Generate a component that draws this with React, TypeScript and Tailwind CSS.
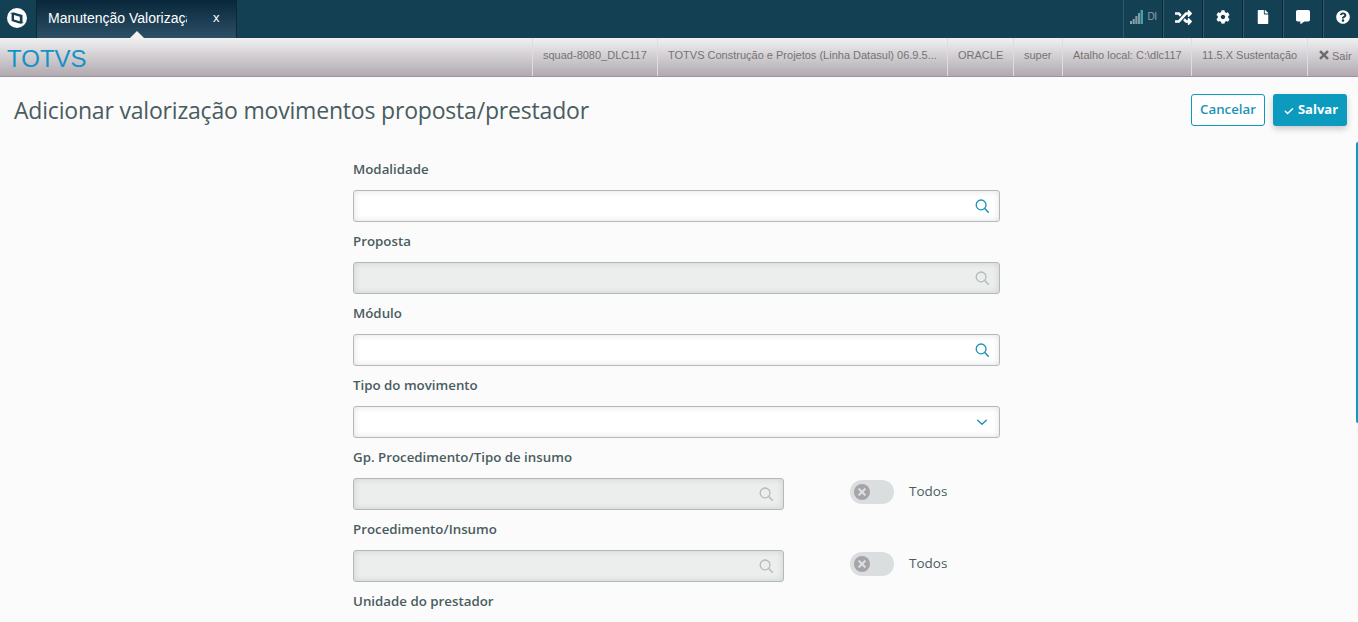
import type { ReactNode } from 'react'
import clsx from 'clsx'
import { FaCog, FaCommentAlt, FaFile, FaQuestionCircle, FaRandom } from 'react-icons/fa'

interface FieldProps {
  label: string
  disabled?: boolean
  select?: boolean
  toggle?: string
}

const FIELDS: FieldProps[] = [
  { label: 'Modalidade' },
  { label: 'Proposta', disabled: true },
  { label: 'Módulo' },
  { label: 'Tipo do movimento', select: true },
  { label: 'Gp. Procedimento/Tipo de insumo', disabled: true, toggle: 'Todos' },
  { label: 'Procedimento/Insumo', disabled: true, toggle: 'Todos' },
]

const SESSION_INFO = [
  { text: 'squad-8080_DLC117', width: 'w-[125px]' },
  { text: 'TOTVS Construção e Projetos (Linha Datasul) 06.9.5...', width: 'w-[290px]' },
  { text: 'ORACLE', width: 'w-[66px]' },
  { text: 'super', width: 'w-[49px]' },
  { text: 'Atalho local: C:\\dlc117', width: 'w-[129px]' },
  { text: '11.5.X Sustentação', width: 'w-[116px]' },
]

function TotvsLogo() {
  return (
    <svg width="20" height="20" viewBox="0 0 20 20">
      <circle cx="10" cy="10" r="10" fill="#fff" />
      <path d="M2.800 5.600C4.500 4.300 6.500 4.300 8.500 4.900l7 2.100v7.600c.7.100 1.300 0 1.900-.3-1.700 1.500-3.900 1.600-5.900 1L4.600 13V5.600c-.7-.3-1.200-.2-1.800 0z" fill="#134053" />
      <path d="M7 7l5.800 1.800v4.400L7 11.400z" fill="#fff" />
    </svg>
  )
}

function SearchIcon() {
  return (
    <svg width="14" height="14" viewBox="0 0 14 14" fill="none" stroke="currentColor">
      <circle cx="6.100" cy="5.900" r="4.900" strokeWidth="1.300" />
      <path d="M9.700 9.500l3.600 3.700" strokeWidth="1.500" strokeLinecap="round" />
    </svg>
  )
}

function ChevronIcon() {
  return (
    <svg width="12" height="8" viewBox="0 0 12 8" fill="none" stroke="currentColor">
      <path d="M1.700 2.200L6 6.200l4.300-4" strokeWidth="1.400" strokeLinecap="round" strokeLinejoin="round" />
    </svg>
  )
}

function SignalIcon() {
  return (
    <svg width="13" height="14" viewBox="0 0 13 14">
      <path d="M0 11h2v3H0zM2.700 9h2v5h-2z" fill="#8fa2ac" />
      <path d="M5.300 6h2.200v8H5.300zM8 3h2v11H8z" fill="#8199a4" />
      <path d="M10.500 0H13v14h-2.500z" fill="#4a9fad" />
    </svg>
  )
}

function TopButton({ children }: { children: ReactNode }) {
  return (
    <div className="flex h-full w-10 shrink-0 items-center justify-center border-r border-l border-r-[#0a2737] border-l-[#33586a] pb-1 text-white">
      {children}
    </div>
  )
}

function TopBar() {
  return (
    <header className="flex h-[38px] bg-[#134053]">
      <div className="flex w-9 items-center justify-center pr-0.5 pb-0.5">
        <TotvsLogo />
      </div>
      <div className="relative flex w-[201px] border-x border-[#0a2a3b] bg-linear-to-b from-[#08273a] to-[#2d5067] pl-[11px] text-white">
        <span className="h-full w-[139px] overflow-hidden text-[14px] leading-[36px] whitespace-nowrap">
          Manutenção Valorização
        </span>
        <span className="ml-[26px] text-[13px] leading-[36px]">x</span>
        {/* Active tab pointer */}
        <svg className="absolute bottom-0 left-[93px]" width="14" height="7" viewBox="0 0 14 7">
          <path d="M0 7l7-7 7 7z" fill="#f1f1f1" />
        </svg>
      </div>
      <div className="ml-auto flex">
        <TopButton>
          <SignalIcon />
          <span className="ml-[5px] text-[10px] leading-none tracking-[-0.500px] text-[#8fa2ac]">DI</span>
        </TopButton>
        <TopButton><FaRandom className="ml-px" size={17} /></TopButton>
        <TopButton><FaCog className="mr-px" size={14} /></TopButton>
        <TopButton><FaFile className="mr-px" size={14} /></TopButton>
        <TopButton><FaCommentAlt className="mr-px" size={14} /></TopButton>
        <div className="flex w-[35px] items-center justify-center border-l border-l-[#33586a] pb-1 pl-[3px] text-white">
          <FaQuestionCircle size={14} />
        </div>
      </div>
    </header>
  )
}

function SessionBar() {
  return (
    <div className="flex h-[39px] border-b border-[#999499] bg-linear-to-b from-[#f1f1f1] to-[#b1aab1] text-[11px] text-[#747474]">
      <span className="pl-[7px] text-[24px] leading-[41px] text-[#1592c5]">TOTVS</span>
      <div className="ml-auto flex">
        {SESSION_INFO.map((info) => (
          <div key={info.text} className={clsx('border-l border-[#dedce0] pl-[10px] leading-[34px] whitespace-nowrap', info.width)}>
            {info.text}
          </div>
        ))}
        <div className="flex w-[51px] border-l border-[#dedce0] pl-[11px] leading-[36px]">
          <svg className="mt-3" width="10" height="10" viewBox="0 0 10 10">
            <path d="M1.900 1.900l6.200 6.200M8.100 1.900L1.900 8.100" stroke="#6c6c6c" strokeWidth="2.500" strokeLinecap="square" />
          </svg>
          <span className="ml-[3px]">Sair</span>
        </div>
      </div>
    </div>
  )
}

function Toggle({ label }: { label: string }) {
  return (
    <div className="ml-[66px] flex h-7 items-center">
      <div className="flex h-6 w-11 items-center rounded-full bg-[#dadedf] pl-1">
        <svg width="16" height="16" viewBox="0 0 16 16">
          <circle cx="8" cy="8" r="8" fill="#a6a3aa" />
          <path d="M5.200 5.200l5.600 5.600M10.800 5.200l-5.600 5.600" stroke="#dadedf" strokeWidth="2.200" strokeLinecap="round" />
        </svg>
      </div>
      <span className="ml-[15px] h-[26px] text-[13.500px] leading-6 text-[#4a5c60]">{label}</span>
    </div>
  )
}

function Field({ label, disabled, select, toggle }: FieldProps) {
  return (
    <div className="h-[72px]">
      <div className="h-[33px] text-[13.300px] leading-6 font-semibold text-[#4a5c60]">{label}</div>
      <div className="flex h-8">
        <div
          className={clsx(
            'flex h-8 items-center justify-end rounded-[3px] border border-[#b3b9b9] pr-[10px] shadow-[inset_0_0_7px_rgba(0,0,0,0.12)]',
            toggle ? 'w-[431px]' : 'w-[647px]',
            disabled ? 'bg-[#ebeeed] text-[#b3babb]' : 'bg-white text-[#1c93b4]',
          )}
        >
          {select ? <span className="pr-px"><ChevronIcon /></span> : <SearchIcon />}
        </div>
        {toggle && <Toggle label={toggle} />}
      </div>
    </div>
  )
}

export default function App() {
  return (
    <div className="relative flex h-[622px] w-[1358px] flex-col overflow-hidden bg-[#fbfbfb] font-['Liberation_Sans',Arial,sans-serif]">
      <TopBar />
      <SessionBar />
      <main className="font-['Open_Sans',sans-serif]">
        <div className="flex items-start justify-between pt-[17px] pr-[11px] pl-[14px]">
          <h1 className="text-[23px] leading-8 tracking-[-0.190px] whitespace-nowrap text-[#4a5c60]">
            Adicionar valorização movimentos proposta/prestador
          </h1>
          <div className="flex gap-2">
            <button className="h-8 w-[74px] rounded-[3px] border border-[#0c9abe] bg-white text-[13.300px] font-semibold text-[#1c93b4]">
              Cancelar
            </button>
            <button className="flex h-8 w-[74px] items-center justify-center rounded-[3px] bg-[#0c9abe] text-[13px] font-bold text-white shadow-[0_3px_6px_rgba(0,0,0,0.2)]">
              <svg className="mt-px mr-1 ml-0.5" width="10" height="8" viewBox="0 0 10 8" fill="none">
                <path d="M1.300 4.200l2.300 2.300 5-4.800" stroke="#fff" strokeWidth="1.500" strokeLinecap="round" />
              </svg>
              Salvar
            </button>
          </div>
        </div>
        <form className="mt-[31px] ml-[353px]">
          {FIELDS.map((field) => (
            <Field key={field.label} {...field} />
          ))}
          <div className="text-[13.300px] leading-6 font-semibold text-[#4a5c60]">Unidade do prestador</div>
        </form>
      </main>
      {/* Side drawer edge */}
      <div className="absolute top-[142px] right-0 h-[281px] w-0.5 rounded-l-[2px] bg-[#0c9abe]" />
    </div>
  )
}
